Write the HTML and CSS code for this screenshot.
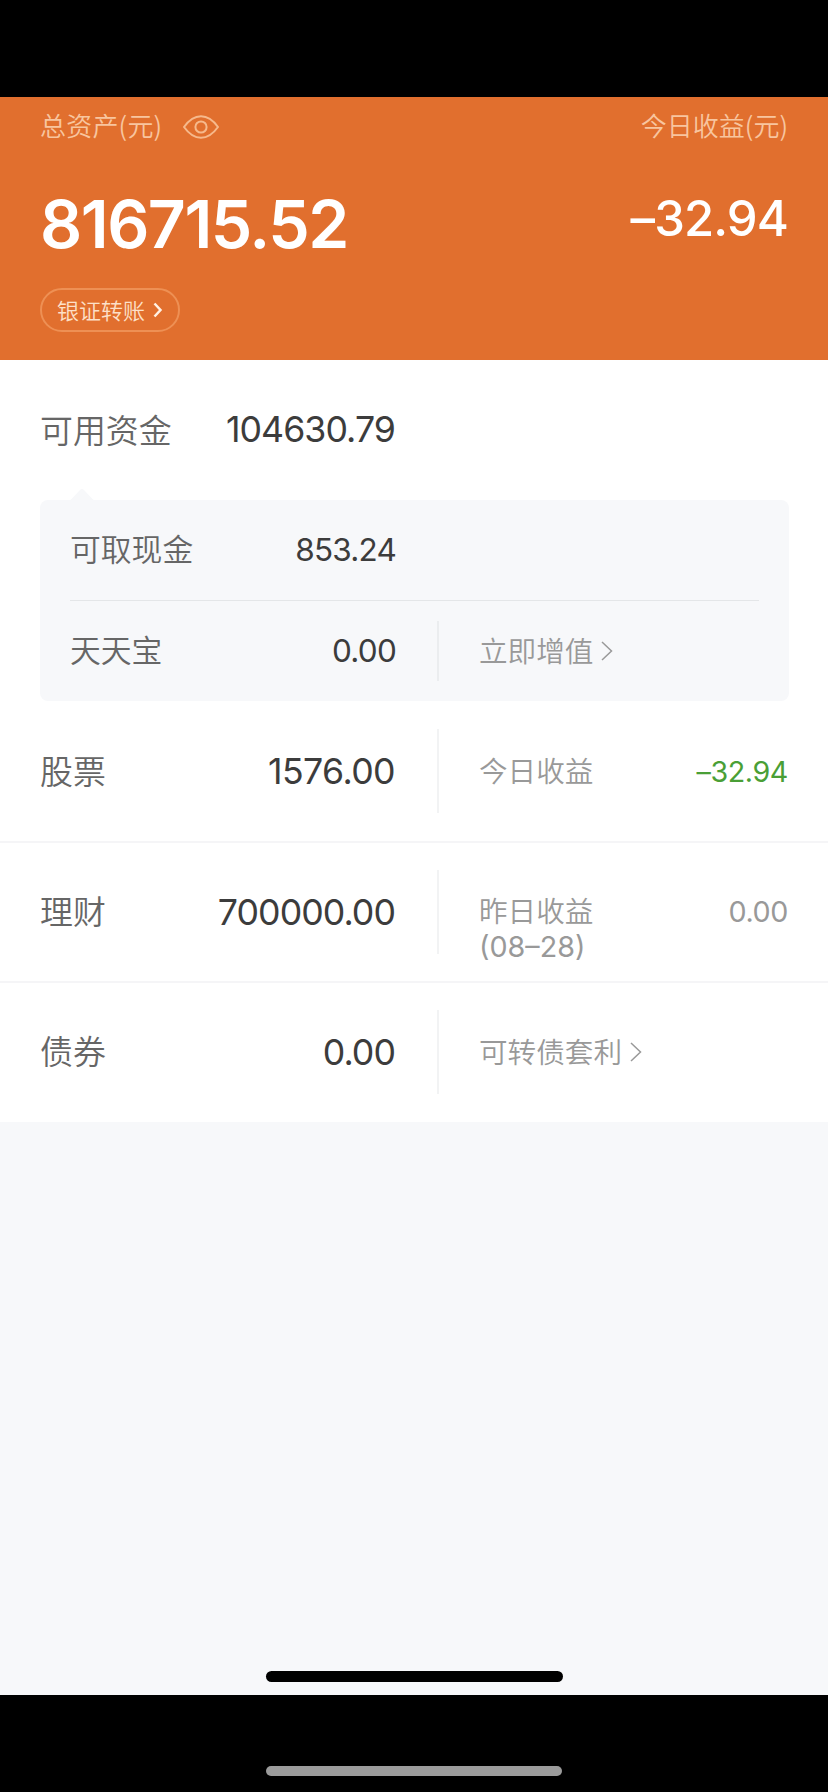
FILE: index.html
```html
<!DOCTYPE html>
<html lang="zh-CN">
<head>
<meta charset="utf-8">
<title>总资产</title>
<link rel="stylesheet" href="styles.css">
</head>
<body>
<div class="screen">
  <div class="status-area"></div>
  <header class="summary">
    <div class="summary-labels">
      <span class="label label-total">总资产(元)</span>
      <svg class="eye" width="36" height="24" viewBox="0 0 36 24"><path d="M1 12C6 5 11.500 1.200 18 1.200S30 5 35 12C30 19 24.500 22.800 18 22.800S6 19 1 12Z"/><circle cx="18" cy="12" r="5.600"/></svg>
      <span class="label label-today">今日收益(元)</span>
    </div>
    <div class="summary-values">
      <span class="total">816715.52</span>
      <span class="today">–32.94</span>
    </div>
    <a class="transfer"><span>银证转账</span><svg width="10" height="16" viewBox="0 0 10 16"><path d="M1.500 1.500L7.500 8L1.500 14.500"/></svg></a>
  </header>
  <main class="assets">
    <section class="row row-funds">
      <span class="name">可用资金</span><span class="amount">104630.79</span>
    </section>
    <section class="details">
      <svg class="pointer" width="28" height="13" viewBox="0 0 28 13"><path d="M0 13Q2 12.500 3.500 11L12 2Q14 0 16 2L24.500 11Q26 12.500 28 13Z"/></svg>
      <div class="detail detail-cash"><span class="name">可取现金</span><span class="amount">853.24</span></div>
      <div class="detail">
        <span class="name">天天宝</span><span class="amount">0.00</span>
        <div class="side"><span class="note">立即增值</span><svg class="chevron" width="12" height="20" viewBox="0 0 12 20"><path d="M1 1L10.500 10L1 19"/></svg></div>
      </div>
    </section>
    <section class="row">
      <span class="name">股票</span><span class="amount amount-stock">1576.00</span>
      <div class="side"><span class="note">今日收益</span><span class="gain loss">–32.94</span></div>
    </section>
    <section class="row row-ruled">
      <span class="name">理财</span><span class="amount">700000.00</span>
      <div class="side side-top"><span class="note">昨日收益<br><span class="date">(08–28)</span></span><span class="gain">0.00</span></div>
    </section>
    <section class="row row-ruled">
      <span class="name">债券</span><span class="amount">0.00</span>
      <div class="side"><span class="note">可转债套利</span><svg class="chevron" width="12" height="20" viewBox="0 0 12 20"><path d="M1 1L10.500 10L1 19"/></svg></div>
    </section>
  </main>
  <div class="rest"><div class="home-bar"></div></div>
  <footer class="system-area"><div class="home-bar home-bar-grey"></div></footer>
</div>
</body>
</html>
```
FILE: styles.css
```css
* { box-sizing: border-box; }
body {
  margin: 0;
  background: #000;
  font-family: Inter, "Noto Sans CJK SC", sans-serif;
}
svg { display: block; flex: none; fill: none; }
.screen {
  display: flex;
  flex-direction: column;
  width: 828px;
  height: 1792px;
  overflow: hidden;
}
.status-area { height: 97px; flex: none; }

.summary {
  height: 263px;
  flex: none;
  padding: 0 40px;
  background: #e16f2e;
  color: #fff;
}
.summary-labels { display: flex; align-items: center; height: 60px; }
.label {
  padding-bottom: 4px;
  font: 350 26px/36px "Noto Sans CJK SC", sans-serif;
  color: #f8c59f;
}
.label-total { letter-spacing: 0.2px; }
.label-today { margin-left: auto; }
.eye { margin: -1px 0 0 21px; stroke: #f6b98c; stroke-width: 2; }
.summary-values {
  display: flex;
  justify-content: space-between;
  align-items: flex-start;
  height: 131px;
  padding-top: 27px;
}
.total { font-size: 66px; line-height: 80px; font-weight: 600; letter-spacing: -1.500px; }
.today { padding-top: 1px; font-size: 49px; line-height: 68px; font-weight: 500; letter-spacing: -0.900px; }
.transfer {
  display: flex;
  align-items: center;
  width: 140px;
  height: 44px;
  padding-left: 15px;
  gap: 8px;
  border: 2px solid #ee9054;
  border-radius: 22px;
  font: 350 22px/32px "Noto Sans CJK SC", sans-serif;
  color: #fde0c8;
}
.transfer span { padding-bottom: 3px; }
.transfer svg { stroke: #fff0e2; stroke-width: 2.500; }

.assets { flex: none; height: 762px; background: #fff; }
.row, .detail {
  display: grid;
  grid-template-columns: 160px 195px 1fr;
  align-items: center;
  height: 140px;
  padding: 0 40px;
}
.row-ruled { box-shadow: inset 0 2px #f5f5f7; }
.name {
  padding-bottom: 3px;
  font: 350 32.900px/46px "Noto Sans CJK SC", sans-serif;
  color: #666;
  white-space: nowrap;
}
.amount {
  justify-self: end;
  font-size: 35.700px;
  line-height: 46px;
  font-weight: 400;
  letter-spacing: -0.950px;
  color: #3c3c3c;
}
.amount-stock { letter-spacing: -0.600px; }
.row-ruled .amount { padding-top: 1px; }
.row-funds .amount { margin-top: -2px; }
.details {
  position: relative;
  height: 201px;
  margin: 0 39px 0 40px;
  border-radius: 8px;
  background: #f7f8fa;
}
.pointer { position: absolute; left: 28px; top: -12px; fill: #f7f8fa; }
.detail { grid-template-columns: 160px 166px 1fr; height: 100px; padding: 0 0 0 30px; }
.detail-cash { height: 101px; border-bottom: 1px solid #e4e6e8; margin: 0 30px; padding: 0; }
.detail .name { padding-bottom: 5px; font-size: 30.800px; }
.detail .amount { font-size: 31.500px; letter-spacing: -0.800px; }
.detail-cash .amount { margin-top: -1px; }
.side {
  display: flex;
  align-items: center;
  height: 84px;
  margin-left: 42px;
  padding-left: 40px;
  border-left: 2px solid #f2f3f4;
}
.row-ruled .side { margin-top: 1px; }
.detail .side { height: 60px; margin-left: 41px; border-color: #ebedef; }
.side-top { align-items: flex-start; padding-top: 24px; }
.note {
  padding-bottom: 3px;
  font: 350 28.600px/35px "Noto Sans CJK SC", sans-serif;
  color: #999;
}
.side-top .note { margin-top: -2px; }
.date { font-family: Inter, sans-serif; font-size: 28.700px; font-weight: 400; }
.chevron { margin-left: 8px; stroke: #999; stroke-width: 1.500; }
.gain { margin-left: auto; font-size: 28.700px; line-height: 35px; font-weight: 400; letter-spacing: -0.400px; color: #999; }
.loss { color: #4a9f36; }

.rest {
  display: flex;
  flex-direction: column;
  justify-content: flex-end;
  height: 573px;
  flex: none;
  padding: 0 265px 13px 266px;
  background: #f7f8fa;
}
.home-bar { height: 11px; border-radius: 6px; background: #000; }
.system-area { height: 97px; padding: 71px 266px 0; background: #000; }
.home-bar-grey { height: 10px; background: #9b9b9b; }
```
